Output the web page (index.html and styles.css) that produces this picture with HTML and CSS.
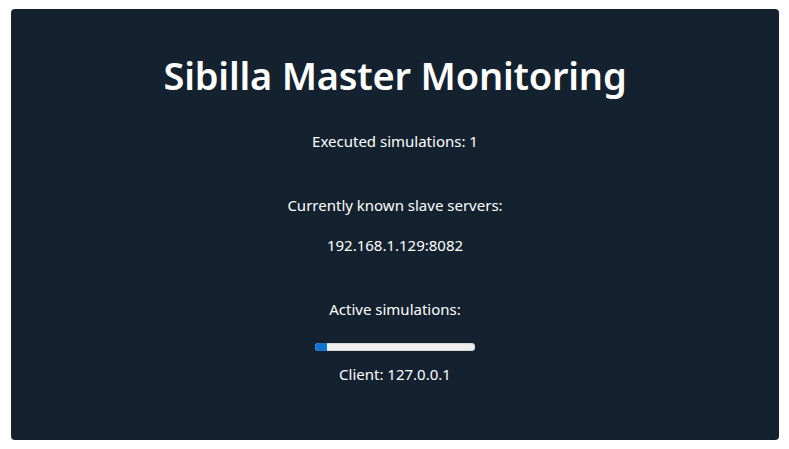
FILE: index.html
```html
<!DOCTYPE html>
<html>
<head>
<meta charset="utf-8">
<link rel="stylesheet" href="styles.css">
</head>
<body>
<div class="card">
  <h1 class="title">Sibilla Master Monitoring</h1>
  <p class="line executed">Executed simulations: 1</p>
  <p class="line known">Currently known slave servers:</p>
  <p class="line ip">192.168.1.129:8082</p>
  <p class="line active">Active simulations:</p>
  <div class="bar"><div class="fill" style="width:12px"></div></div>
  <p class="line client">Client: 127.0.0.1</p>
</div>
</body>
</html>
```
FILE: styles.css
```css
html, body { margin: 0; padding: 0; background: #fff; }
body { padding: 9px 10px 9px 11px; font-family: "Noto Sans", "Open Sans", sans-serif; }
.card {
  width: 768px;
  height: 431px;
  background: #142230;
  border-radius: 4px;
  color: #fff;
  display: flex;
  flex-direction: column;
  align-items: center;
  box-sizing: border-box;
  padding-top: 44px;
}
.title {
  margin: 0;
  font-size: 38px;
  font-weight: 600;
  line-height: 44px;
  letter-spacing: -0.2px;
}
.line { margin: 0; font-size: 15px; line-height: 20px; }
.executed { margin-top: 34px; }
.known { margin-top: 44px; }
.ip { margin-top: 20px; }
.active { margin-top: 44px; }
.bar {
  margin-top: 24px;
  width: 160px;
  height: 8px;
  background: #efefef;
  border-radius: 4px;
  overflow: hidden;
  box-shadow: inset 0 0 0 1px #d6d6d6;
}
.fill { height: 100%; background: #0f73d1; }
.client { margin-top: 13px; }
```
